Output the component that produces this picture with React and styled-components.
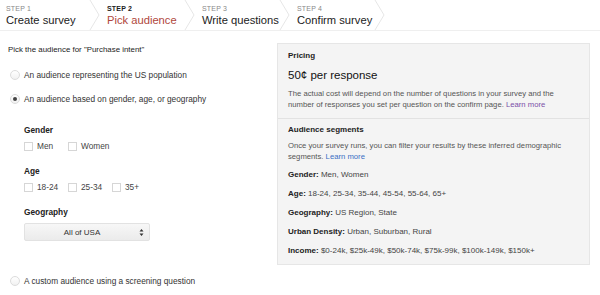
import React, { useState } from 'react'
import styled, { createGlobalStyle } from 'styled-components'

const GlobalStyle = createGlobalStyle`
  body {
    margin: 0;
    background: #fff;
    font-family: "Liberation Sans", Arial, sans-serif;
    color: #222;
  }
`

const Page = styled.div`
  width: 600px;
  height: 295px;
  overflow: hidden;
`

const StepBar = styled.div`
  display: flex;
  height: 30px;
  border-bottom: 1px solid #efefef;
`

const Step = styled.div`
  position: relative;
  width: 95px;
  padding-left: ${p => (p.first ? 6 : 12)}px;
  box-sizing: border-box;
  display: flex;
  flex-direction: column;
  justify-content: center;
`

const StepLabel = styled.div`
  font-size: 7px;
  line-height: 9px;
  letter-spacing: 0.2px;
  color: ${p => (p.active ? '#222' : '#888')};
  font-weight: ${p => (p.active ? 'bold' : 'normal')};
`

const StepTitle = styled.div`
  font-size: 11.2px;
  line-height: 14px;
  color: ${p => (p.active ? '#b0473c' : '#222')};
`

const Chevron = styled.svg`
  position: absolute;
  right: -6px;
  top: 0;
`

const Main = styled.div`
  display: flex;
  align-items: flex-start;
`

const Left = styled.div`
  width: 277px;
  padding-left: 8px;
  padding-top: 13px;
  box-sizing: border-box;
  font-size: 8.3px;
  color: #333;
`

const Heading = styled.div`
  font-size: 7.9px;
  line-height: 12px;
  color: #222;
`

const RadioRow = styled.label`
  display: flex;
  align-items: center;
  height: 12px;
  margin-top: ${p => p.mt}px;
  gap: 4px;
  padding-left: 2px;
`

const Radio = styled.span`
  width: 10px;
  height: 10px;
  border-radius: 50%;
  border: 1px solid #dcdcdc;
  background: linear-gradient(#fff, #f1f1f1);
  box-sizing: border-box;
  display: flex;
  align-items: center;
  justify-content: center;
  &::after {
    content: '';
    width: 4px;
    height: 4px;
    border-radius: 50%;
    background: ${p => (p.checked ? '#444' : 'transparent')};
  }
`

const Options = styled.div`
  padding-left: 16px;
  display: flex;
  flex-direction: column;
`

const GroupLabel = styled.div`
  font-weight: bold;
  color: #222;
  line-height: 12px;
  margin-top: ${p => p.mt}px;
`

const CheckRow = styled.div`
  display: flex;
  height: 12px;
  margin-top: 4px;
  align-items: center;
`

const Check = styled.label`
  display: flex;
  align-items: center;
  gap: 4px;
  width: 44px;
  color: #444;
`

const Box = styled.span`
  width: 9px;
  height: 9px;
  border: 1px solid #d6d6d6;
  background: #fff;
  box-sizing: border-box;
`

const Select = styled.div`
  margin-top: 5px;
  width: 126px;
  height: 18px;
  box-sizing: border-box;
  border: 1px solid #e2e2e2;
  border-radius: 2px;
  background: linear-gradient(#f7f7f7, #ebebeb);
  display: flex;
  align-items: center;
  font-size: 8px;
  color: #333;
  span { flex: 1; text-align: center; }
`

const Arrows = styled.svg`
  margin-right: 5px;
`

const Panel = styled.div`
  margin-top: 12px;
  width: 313px;
  box-sizing: border-box;
  background: #f4f4f4;
  border: 1px solid #e6e6e6;
`

const Section = styled.div`
  padding: ${p => p.pad};
  border-top: ${p => (p.divider ? '1px solid #e2e2e2' : 'none')};
`

const SectionTitle = styled.div`
  font-weight: bold;
  font-size: 8px;
  line-height: 11px;
  color: #222;
`

const Price = styled.div`
  font-size: 11.5px;
  line-height: 14px;
  margin-top: 7px;
  color: #111;
`

const Note = styled.div`
  font-size: 7.7px;
  line-height: 11px;
  color: #555;
  max-width: ${p => p.maxw}px;
  margin-top: ${p => p.mt}px;
  a { color: ${p => p.link}; text-decoration: none; }
`

const SegRow = styled.div`
  font-size: 8px;
  line-height: 11px;
  color: #444;
  margin-top: ${p => p.mt}px;
  b { color: #222; }
`

const steps = [
  { label: 'STEP 1', title: 'Create survey' },
  { label: 'STEP 2', title: 'Pick audience', active: true },
  { label: 'STEP 3', title: 'Write questions' },
  { label: 'STEP 4', title: 'Confirm survey' },
]

const segments = [
  ['Gender', 'Men, Women'],
  ['Age', '18-24, 25-34, 35-44, 45-54, 55-64, 65+'],
  ['Geography', 'US Region, State'],
  ['Urban Density', 'Urban, Suburban, Rural'],
  ['Income', '$0-24k, $25k-49k, $50k-74k, $75k-99k, $100k-149k, $150k+'],
]

function App() {
  const [audience] = useState('demo')
  return (
    <Page>
      <GlobalStyle />
      <StepBar>
        {steps.map((s, i) => (
          <Step key={s.label} first={i === 0}>
            <StepLabel active={s.active}>{s.label}</StepLabel>
            <StepTitle active={s.active}>{s.title}</StepTitle>
            <Chevron width="12" height="30" viewBox="0 0 12 30">
              <path d="M1 0 L10 15 L1 30" fill="none" stroke="#e6e6e6" strokeWidth="1" />
            </Chevron>
          </Step>
        ))}
      </StepBar>
      <Main>
        <Left>
          <Heading>Pick the audience for "Purchase intent"</Heading>
          <RadioRow mt={13}>
            <Radio checked={audience === 'us'} />
            An audience representing the US population
          </RadioRow>
          <RadioRow mt={12}>
            <Radio checked={audience === 'demo'} />
            An audience based on gender, age, or geography
          </RadioRow>
          <Options>
            <GroupLabel mt={19}>Gender</GroupLabel>
            <CheckRow>
              <Check><Box />Men</Check>
              <Check><Box />Women</Check>
            </CheckRow>
            <GroupLabel mt={13}>Age</GroupLabel>
            <CheckRow>
              <Check><Box />18-24</Check>
              <Check><Box />25-34</Check>
              <Check><Box />35+</Check>
            </CheckRow>
            <GroupLabel mt={13}>Geography</GroupLabel>
            <Select>
              <span>All of USA</span>
              <Arrows width="5" height="9" viewBox="0 0 5 9">
                <path d="M0.5 3.5 L2.5 1 L4.5 3.5 Z M0.5 5.5 L2.5 8 L4.5 5.5 Z" fill="#333" />
              </Arrows>
            </Select>
          </Options>
          <RadioRow mt={34}>
            <Radio checked={audience === 'custom'} />
            A custom audience using a screening question
          </RadioRow>
        </Left>
        <Panel>
          <Section pad="6px 10px 8px">
            <SectionTitle>Pricing</SectionTitle>
            <Price>50¢ per response</Price>
            <Note mt={6} maxw={272} link="#7a4fa8">
              The actual cost will depend on the number of questions in your survey and the
              number of responses you set per question on the confirm page. <a href="#">Learn more</a>
            </Note>
          </Section>
          <Section divider pad="5px 10px 8px">
            <SectionTitle>Audience segments</SectionTitle>
            <Note mt={5} maxw={290} link="#3a6fc4">
              Once your survey runs, you can filter your results by these inferred demographic
              segments. <a href="#">Learn more</a>
            </Note>
            {segments.map(([k, v], i) => (
              <SegRow key={k} mt={i === 0 ? 7 : 8}>
                <b>{k}:</b> {v}
              </SegRow>
            ))}
          </Section>
        </Panel>
      </Main>
    </Page>
  )
}

export default App
